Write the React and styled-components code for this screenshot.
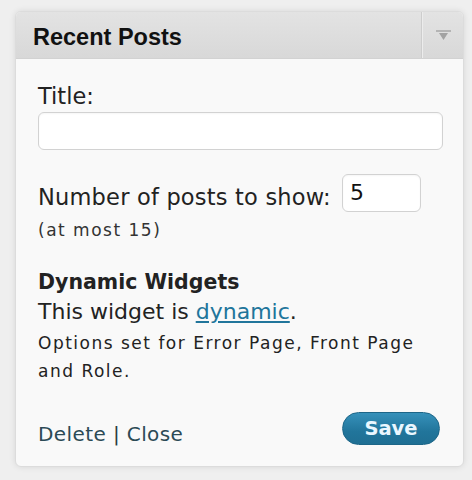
import React from 'react'
import styled, { createGlobalStyle } from 'styled-components'

const GlobalStyle = createGlobalStyle`
  html, body {
    margin: 0;
    padding: 0;
    background: #efefef;
  }
  body {
    font-family: "DejaVu Sans", Verdana, sans-serif;
    color: #222;
  }
`

const Page = styled.div`
  padding: 11px 8px 12px 15px;
`

const Widget = styled.div`
  width: 449px;
  box-sizing: border-box;
  border: 1px solid #dcdcdc;
  border-radius: 6px;
  background: #f9f9f9;
  box-shadow: 0 0 6px rgba(0, 0, 0, 0.1);
  overflow: hidden;
`

const Header = styled.div`
  display: flex;
  height: 46px;
  background: linear-gradient(#e3e3e3, #d8d8d8);
  border-bottom: 1px solid #d2d2d2;
`

const HeaderTitle = styled.h3`
  flex: 1;
  margin: 0;
  padding: 3px 0 0 17px;
  align-self: center;
  font-family: "Liberation Sans", Arial, sans-serif;
  font-weight: bold;
  font-size: 23.5px;
  line-height: 28px;
  color: #111;
`

const Toggle = styled.div`
  width: 39px;
  display: flex;
  align-items: center;
  justify-content: center;
  border-left: 1px solid #cdcdcd;
  box-shadow: inset 1px 0 0 #ececec;
  padding-left: 2px;
`

const Body = styled.div`
  padding: 24px 20px 21px 22px;
`

const Label = styled.div`
  font-size: 22.5px;
  line-height: 26px;
`

const TextInput = styled.div`
  box-sizing: border-box;
  height: 38px;
  margin-top: 3px;
  border: 1px solid #d2d2d2;
  border-radius: 6px;
  background: #fff;
  box-shadow: inset 0 1px 2px rgba(0, 0, 0, 0.04);
`

const NumberRow = styled.div`
  display: flex;
  align-items: flex-start;
  gap: 11px;
  margin-top: 24px;
`

const RowLabel = styled(Label)`
  margin-top: 10px;
  letter-spacing: 0.2px;
`

const NumberInput = styled(TextInput)`
  width: 79px;
  margin-top: 0;
  padding-left: 7px;
  font-size: 22px;
  line-height: 36px;
  color: #111;
`

const Hint = styled.div`
  margin-top: 8px;
  font-size: 17px;
  line-height: 20px;
  letter-spacing: 1.5px;
  color: #333;
`

const SectionTitle = styled.div`
  margin-top: 30px;
  font-weight: bold;
  font-size: 20.5px;
  line-height: 24px;
  color: #222;
`

const Sentence = styled(Label)`
  margin-top: 5px;
  font-size: 22px;
  color: #222;
`

const Link = styled.a`
  color: #21759b;
  text-decoration: underline;
`

const Options = styled.div`
  margin-top: 4px;
  font-size: 17px;
  line-height: 28px;
  letter-spacing: 1.5px;
  color: #222;
`

const Footer = styled.div`
  display: flex;
  justify-content: space-between;
  align-items: flex-end;
  margin-top: 27px;
`

const Actions = styled.div`
  font-size: 20px;
  line-height: 24px;
  letter-spacing: 0.4px;
  color: #2d3b40;
  margin-bottom: -1px;
`

const ActionLink = styled.a`
  color: #2b4a55;
  text-decoration: none;
`

const SaveButton = styled.button`
  width: 98px;
  height: 33px;
  margin-right: 3px;
  padding: 0;
  border: 1px solid #1d6688;
  border-radius: 17px;
  background: linear-gradient(#3691ba, #21759b 60%, #1f6f93);
  color: #eaf7ff;
  font-family: "DejaVu Sans", Verdana, sans-serif;
  font-weight: bold;
  font-size: 19.5px;
  line-height: 31px;
`

const Arrow = () => (
  <svg width="15" height="11" viewBox="0 0 15 11">
    <rect x="0" y="0" width="15" height="2" fill="#b4b4b4" />
    <path d="M3 3 L12 3 L7.5 10 Z" fill="#a2a2a2" />
  </svg>
)

const App = () => (
  <>
    <GlobalStyle />
    <Page>
      <Widget>
        <Header>
          <HeaderTitle>Recent Posts</HeaderTitle>
          <Toggle>
            <Arrow />
          </Toggle>
        </Header>
        <Body>
          <Label>Title:</Label>
          <TextInput />
          <NumberRow>
            <RowLabel>Number of posts to show:</RowLabel>
            <NumberInput>5</NumberInput>
          </NumberRow>
          <Hint>(at most 15)</Hint>
          <SectionTitle>Dynamic Widgets</SectionTitle>
          <Sentence>
            This widget is <Link href="#">dynamic</Link>.
          </Sentence>
          <Options>
            Options set for Error Page, Front Page and Role.
          </Options>
          <Footer>
            <Actions>
              <ActionLink href="#">Delete</ActionLink> | <ActionLink href="#">Close</ActionLink>
            </Actions>
            <SaveButton>Save</SaveButton>
          </Footer>
        </Body>
      </Widget>
    </Page>
  </>
)

export default App
